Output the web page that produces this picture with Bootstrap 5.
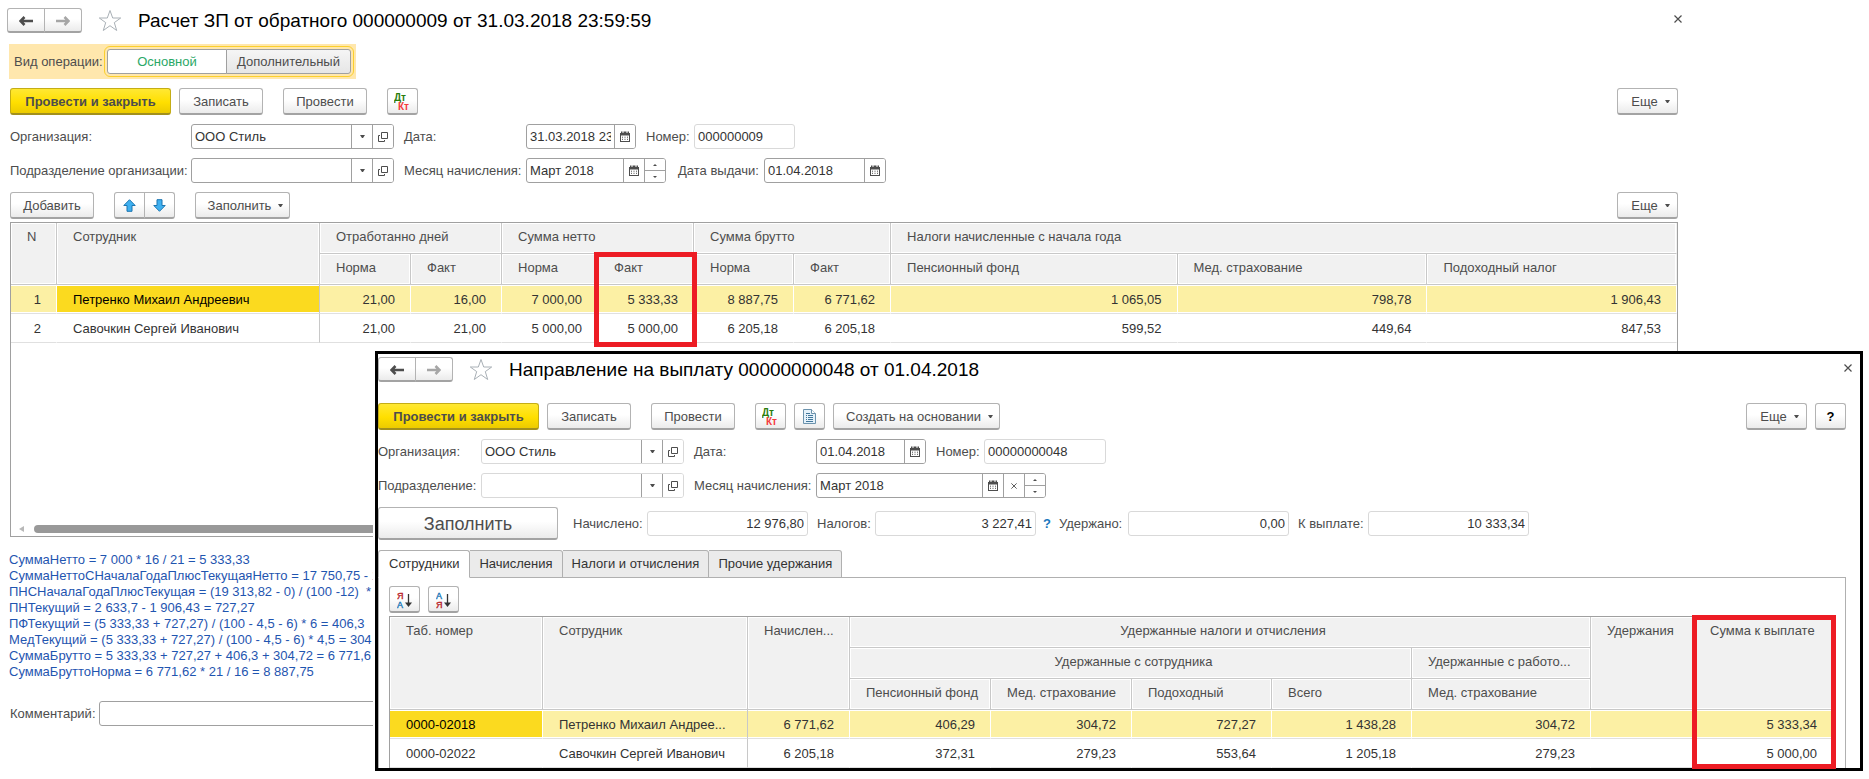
<!DOCTYPE html>
<html lang="ru">
<head>
<meta charset="utf-8">
<meta name="viewport" content="width=device-width, initial-scale=1">
<title>Расчет ЗП от обратного</title>
<link href="https://cdn.jsdelivr.net/npm/bootstrap@5.3.0/dist/css/bootstrap.min.css" rel="stylesheet">
<style>
  body { font: 13px/16px "Liberation Sans", Arial, sans-serif; color: #4d4d4d; background: #fff; overflow: hidden; }
  .doc-main { padding: 8px 191px 0 10px; white-space: nowrap; }
  .gap-row { margin-top: 9px; }
  .head-main { margin-left: -3px; margin-right: -4px; }
  .head-pay { margin-right: -6px; }
  .doc-title { font-size: 19px; line-height: 24px; color: #000; font-weight: 400; margin: 0 0 0 16px; }
  .close-x { border: 0; background: none; padding: 0; line-height: 0; color: #4d4d4d; }
  .bar-pay { margin-top: 21px; }
  .ms-20 { margin-left: 20px; }

  /* push buttons */
  .b1c { --bs-btn-font-size: 13px; --bs-btn-line-height: 16px; --bs-btn-padding-x: 0; --bs-btn-padding-y: 0;
    --bs-btn-border-radius: 3px; --bs-btn-color: #4d4d4d; --bs-btn-border-color: #b3b3b3;
    height: 27px; padding-top: 1px; border-bottom: 2px solid #a3a3a3; background: linear-gradient(#fff 45%, #ebebeb); flex: none;
    display: inline-flex; align-items: center; justify-content: center; }
  .b1c-main { --bs-btn-color: #4d4d4d; font-weight: 700; border-color: #c4ad16; border-bottom-color: #a2901d; background: linear-gradient(#ffe833, #ffdf00 55%, #eccb00); }
  .b1c-big { height: 33px; width: 180px; font-size: 18px; }
  .w-nav { width: 38px; height: 25px; } .w-ico { width: 31px; } .w-more { width: 61px; }
  .w-act { width: 84px; } .w-post { width: 161px; }
  .w-fill { width: 95px; } .w-base { width: 167px; }
  .btn-off { --bs-btn-color: #a6a6a6; }
  .has-tri { padding-left: 6px; gap: 7px; }
  .tri { width: 5px; border: 2px solid transparent; border-top: 3px solid currentColor; border-bottom: 0; display: inline-block; }
  .tri-up { border: 2px solid transparent; border-bottom: 2px solid currentColor; border-top: 0; }
  .tri-dn { border: 2px solid transparent; border-top: 2px solid currentColor; border-bottom: 0; }

  /* operation kind switch */
  .kind { background: #ffe7ad; height: 35px; margin: 11px 0 0 -1px; padding: 2px 2px 2px 5px; width: 347px; }
  .kind-ring { border: 1px solid #fbcf2d; padding: 2px; margin-left: auto; }
  .kind-ring .b1c, .kind-ring .btn-check:checked + .b1c { height: 25px; border-color: #a0a0a0; border-bottom-width: 1px; }
  .kind-ring .b1c { background: linear-gradient(#f5f5f5, #e6e6e6); }
  .kind-ring .btn-check:checked + .b1c { background: #fff; color: #2aa866; }
  .w-k1 { width: 120px; } .w-k2 { width: 125px; }

  /* entry fields */
  .fld { display: flex; height: 25px; border: 1px solid #a0a0a0; border-radius: 3px; background: #fff; flex: none; overflow: hidden; }
  .fld-ro { border-color: #d9d9d9; }
  .fld input { flex: 1 1 0; min-width: 0; width: 0; border: 0; outline: 0; padding: 0 3px; background: none; color: #333; font: inherit; }
  .fld button { flex: none; width: 21px; border: 0; border-left: 1px solid #a0a0a0; background: #fff; padding: 0; color: #4d4d4d;
    display: flex; align-items: center; justify-content: center; }
  .fld .spin { flex: none; width: 21px; display: flex; flex-direction: column; border-left: 1px solid #a0a0a0; }
  .fld .spin button { width: 100%; flex: 1; border-left: 0; }
  .fld .spin button + button { border-top: 1px solid #a0a0a0; }
  .f-org { width: 203px; } .f-date { width: 110px; } .f-sum { width: 161px; }
  .f-num { width: 101px; } .f-numl { width: 122px; } .f-month { width: 140px; } .f-monthl { width: 230px; } .f-issue { width: 122px; }
  .l-a { width: 181px; } .l-b { width: 122px; margin-left: 10px; } .l-c { width: 48px; margin-left: 10px; }
  .l-issue { width: 86px; margin-left: 12px; }
  .l-w { width: 103px; } .l-s { margin-left: 9px; }
  .l-sum1 { width: 74px; margin-left: 15px; } .l-sum2 { width: 58px; } .l-sum3 { width: 69px; } .l-sum4 { width: 70px; }
  .hint { color: #1a77bd; width: 16px; margin-left: 7px; }

  /* data grids */
  .gridbox { border: 1px solid #a0a0a0; background: #fff; margin-top: 3px; }
  .gridbox table { width: 100%; table-layout: fixed; border-collapse: separate; border-spacing: 0; }
  .gridbox th, .gridbox td { padding: 0 15px 0 16px; overflow: hidden; text-overflow: ellipsis; white-space: nowrap; }
  .gridbox th { height: 31px; font-weight: 400; background: #f1f1f1; border: 0 solid #c8c8c8; border-width: 0 1px 1px 0; box-shadow: inset 0 0 0 1px #fff; vertical-align: top; padding: 6px 10px 0 16px; }
  .gridbox th:last-child { border-right-color: #f1f1f1; }
  .gridbox th.th-line { border-right-color: #c8c8c8; }
  .gridbox td { height: 29px; padding-top: 1px; color: #333; text-align: right; border-bottom: 1px solid #e0e0e0; border-right: 1px solid transparent; }
  .gridbox td.tl { text-align: left; }
  .gridbox td.fix { border-right-color: #c8c8c8; }
  .gridbox tr.cur td { background: #fcf0a4; background-clip: padding-box; box-shadow: inset 0 1px #fff, inset 0 -1px #fff; }
  .gridbox tr.cur td.sel { background-color: #fbda1f; color: #000; }
  .gridbox .marked { overflow: visible; position: relative; }
  .marked::after { content: ""; position: absolute; z-index: 2; border: 5px solid #ed1c24; pointer-events: none; top: -2px; left: -4px; right: -4px; height: 95px; }
  .marked-tall::after { height: 154px; left: -2px; }
  .grid-main { min-height: 315px; }
  .scroll-row { padding: 0 24px 3px 8px; gap: 10px; }
  .hbar { height: 8px; border-radius: 4px; background: #999; }
  .formulas { color: #1f55b0; margin: 15px 0 21px -1px; }
  .l-comment { width: 89px; }

  /* second document window */
  .doc-pay { position: absolute; z-index: 5; left: 375px; right: 6px; top: 351px; background: #fff; border: 3px solid #000;
    box-shadow: -2px 0 #fff; padding-top: 3px; white-space: nowrap; }
  .pay-inner { padding-right: 14px; }
  .pay-tabs { border: 0; margin-top: 10px; position: relative; }
  .pay-tabs .nav-link { padding: 0 9px; height: 28px; font-size: 13px; color: #333; background: #ebebeb; border: 1px solid #b0b0b0; border-left-width: 0; border-radius: 0 3px 0 0; margin: 0; }
  .pay-tabs li:first-child .nav-link { padding: 0 10px; border-left-width: 1px; border-radius: 3px 3px 0 0; }
  .pay-tabs .nav-link.active { background: #fff; color: #333; border-color: #b0b0b0 #b0b0b0 #fff; }
  .pay-panel { border: 1px solid #b0b0b0; border-bottom: 0; margin-top: -1px; padding: 8px 11px 0 10px; }
  .pay-panel .gridbox { border-bottom: 0; }
</style>
</head>
<body>
<svg width="0" height="0" class="position-absolute" aria-hidden="true">
  <symbol id="i-back" viewBox="0 0 14 10"><path d="M5.500 1 1.500 5l4 4M2 5H14" fill="none" stroke="currentColor" stroke-width="2.600"/></symbol>
  <symbol id="i-fwd" viewBox="0 0 14 10"><path d="M8.500 1 12.500 5 8.500 9M12 5H0" fill="none" stroke="currentColor" stroke-width="2.600"/></symbol>
  <symbol id="i-star" viewBox="0 0 24 23"><path d="M12 1.500 14.700 9H22.700L16.300 13.600 18.700 21.500 12 16.700 5.300 21.500 7.700 13.600 1.300 9H9.300Z" fill="#fff" stroke="#a9b0b6"/></symbol>
  <symbol id="i-x" viewBox="0 0 8 8"><path d="M.5.5l7 7M7.500.5l-7 7" stroke="currentColor" stroke-width="1.200"/></symbol>
  <symbol id="i-cal" viewBox="0 0 10 11"><path d="M0 2h1V.5h1.500V2h1V.5h3V2h1V.5H9V2h1v9H0ZM1 4.500V10h8V4.500Z" fill="currentColor" fill-rule="evenodd"/><path d="M2 6.200h6M2 8.300h6" stroke="currentColor" stroke-dasharray="1 1.500"/></symbol>
  <symbol id="i-open" viewBox="0 0 10 10"><path d="M3.500.5h6v6h-6ZM2 3.500H.5v6h6V8" fill="none" stroke="currentColor"/></symbol>
  <symbol id="i-up" viewBox="0 0 13 13"><path d="M6.500.7 12.200 6.500H9V12.300H4V6.500H.8Z" fill="#3fb0f0" stroke="#1b75b0"/></symbol>
  <symbol id="i-down" viewBox="0 0 13 13"><path d="M6.500 12.300 12.200 6.500H9V.7H4V6.500H.8Z" fill="#3fb0f0" stroke="#1b75b0"/></symbol>
  <symbol id="i-arr" viewBox="0 0 7 13"><path d="M3.500 0V9" stroke="#333" stroke-width="1.300"/><path d="M0 8.500h7L3.500 13Z" fill="#333"/></symbol>
</svg>

<main class="doc-main">
  <header class="head-main d-flex align-items-center">
    <div class="btn-group flex-shrink-0">
      <button class="btn b1c w-nav" aria-label="Назад"><svg width="14" height="10"><use href="#i-back"/></svg></button>
      <button class="btn b1c btn-off w-nav" aria-label="Вперед"><svg width="14" height="10"><use href="#i-fwd"/></svg></button>
    </div>
    <svg class="ms-3" width="24" height="23"><use href="#i-star"/></svg>
    <h1 class="doc-title">Расчет ЗП от обратного 000000009 от 31.03.2018 23:59:59</h1>
    <button class="close-x ms-auto mb-1" aria-label="Закрыть"><svg width="8" height="8"><use href="#i-x"/></svg></button>
  </header>

  <div class="kind d-flex align-items-center">
    <span id="kindLabel">Вид операции:</span>
    <div class="kind-ring btn-group" role="group" aria-labelledby="kindLabel">
      <input class="btn-check" type="radio" name="kind" id="k1" checked><label class="btn b1c w-k1" for="k1">Основной</label>
      <input class="btn-check" type="radio" name="kind" id="k2"><label class="btn b1c w-k2" for="k2">Дополнительный</label>
    </div>
  </div>

  <div class="d-flex gap-row">
    <button class="btn b1c b1c-main w-post">Провести и закрыть</button>
    <button class="btn b1c w-act ms-2">Записать</button>
    <button class="btn b1c w-act ms-20">Провести</button>
    <button class="btn b1c w-ico ms-20" aria-label="Дт Кт"><svg width="18" height="18" font-family="Liberation Sans" font-weight="700" font-size="10"><text x="0" y="8" fill="#2a7d0b">Дт</text><text x="4" y="17" fill="#f43b3b">Кт</text></svg></button>
    <button class="btn b1c has-tri w-more ms-auto">Еще<i class="tri"></i></button>
  </div>

  <div class="d-flex align-items-center gap-row">
    <label class="l-a" for="org">Организация:</label>
    <div class="fld f-org"><input id="org" value="ООО Стиль"><button aria-label="Список"><i class="tri"></i></button><button aria-label="Открыть"><svg width="10" height="10"><use href="#i-open"/></svg></button></div>
    <label class="l-b" for="date">Дата:</label>
    <div class="fld f-date"><input id="date" value="31.03.2018 23"><button aria-label="Календарь"><svg width="10" height="11"><use href="#i-cal"/></svg></button></div>
    <label class="l-c" for="num">Номер:</label>
    <div class="fld fld-ro f-num"><input id="num" value="000000009" readonly></div>
  </div>
  <div class="d-flex align-items-center gap-row">
    <label class="l-a" for="dep">Подразделение организации:</label>
    <div class="fld f-org"><input id="dep"><button aria-label="Список"><i class="tri"></i></button><button aria-label="Открыть"><svg width="10" height="10"><use href="#i-open"/></svg></button></div>
    <label class="l-b" for="month">Месяц начисления:</label>
    <div class="fld f-month"><input id="month" value="Март 2018"><button aria-label="Календарь"><svg width="10" height="11"><use href="#i-cal"/></svg></button><span class="spin"><button aria-label="Больше"><i class="tri-up"></i></button><button aria-label="Меньше"><i class="tri-dn"></i></button></span></div>
    <label class="l-issue" for="issue">Дата выдачи:</label>
    <div class="fld f-issue"><input id="issue" value="01.04.2018"><button aria-label="Календарь"><svg width="10" height="11"><use href="#i-cal"/></svg></button></div>
  </div>

  <div class="d-flex gap-row">
    <button class="btn b1c w-act">Добавить</button>
    <div class="btn-group ms-20">
      <button class="btn b1c w-ico" aria-label="Вверх"><svg width="13" height="13"><use href="#i-up"/></svg></button>
      <button class="btn b1c w-ico" aria-label="Вниз"><svg width="13" height="13"><use href="#i-down"/></svg></button>
    </div>
    <button class="btn b1c has-tri w-fill ms-20">Заполнить<i class="tri"></i></button>
    <button class="btn b1c has-tri w-more ms-auto">Еще<i class="tri"></i></button>
  </div>

  <div class="gridbox grid-main d-flex flex-column">
    <table>
      <colgroup><col style="width:46px"><col style="width:263px"><col style="width:91px"><col style="width:91px"><col style="width:96px"><col style="width:96px"><col style="width:100px"><col style="width:97px"><col style="width:17.2%"><col style="width:15%"><col></colgroup>
      <thead>
        <tr><th rowspan="2">N</th><th rowspan="2">Сотрудник</th><th colspan="2">Отработанно дней</th><th colspan="2">Сумма нетто</th><th colspan="2">Сумма брутто</th><th colspan="3">Налоги начисленные с начала года</th></tr>
        <tr><th>Норма</th><th>Факт</th><th>Норма</th><th class="marked">Факт</th><th>Норма</th><th>Факт</th><th>Пенсионный фонд</th><th>Мед. страхование</th><th>Подоходный налог</th></tr>
      </thead>
      <tbody>
        <tr class="cur"><td>1</td><td class="tl fix sel">Петренко Михаил Андреевич</td><td>21,00</td><td>16,00</td><td>7 000,00</td><td>5 333,33</td><td>8 887,75</td><td>6 771,62</td><td>1 065,05</td><td>798,78</td><td>1 906,43</td></tr>
        <tr><td>2</td><td class="tl fix">Савочкин Сергей Иванович</td><td>21,00</td><td>21,00</td><td>5 000,00</td><td>5 000,00</td><td>6 205,18</td><td>6 205,18</td><td>599,52</td><td>449,64</td><td>847,53</td></tr>
      </tbody>
    </table>
    <div class="scroll-row mt-auto d-flex align-items-center">
      <svg width="5" height="6"><path d="M5 0v6L0 3z" fill="#b8b8b8"/></svg><div class="hbar flex-fill"></div>
    </div>
  </div>

  <div class="formulas">
    <div>СуммаНетто = 7 000 * 16 / 21 = 5 333,33</div>
    <div>СуммаНеттоСНачалаГодаПлюсТекущаяНетто = 17 750,75 - 1</div>
    <div>ПНСНачалаГодаПлюсТекущая = (19 313,82 - 0) / (100 -12)&nbsp; *</div>
    <div>ПНТекущий = 2 633,7 - 1 906,43 = 727,27</div>
    <div>ПФТекущий = (5 333,33 + 727,27) / (100 - 4,5 - 6) * 6 = 406,3</div>
    <div>МедТекущий = (5 333,33 + 727,27) / (100 - 4,5 - 6) * 4,5 = 304</div>
    <div>СуммаБрутто = 5 333,33 + 727,27 + 406,3 + 304,72 = 6 771,6</div>
    <div>СуммаБруттоНорма = 6 771,62 * 21 / 16 = 8 887,75</div>
  </div>
  <div class="d-flex align-items-center">
    <label class="l-comment" for="comment">Комментарий:</label>
    <div class="fld flex-fill"><input id="comment"></div>
  </div>
</main>

<section class="doc-pay">
  <div class="pay-inner">
    <header class="head-pay d-flex align-items-center">
      <div class="btn-group flex-shrink-0">
        <button class="btn b1c w-nav" aria-label="Назад"><svg width="14" height="10"><use href="#i-back"/></svg></button>
        <button class="btn b1c btn-off w-nav" aria-label="Вперед"><svg width="14" height="10"><use href="#i-fwd"/></svg></button>
      </div>
      <svg class="ms-3" width="24" height="23"><use href="#i-star"/></svg>
      <h2 class="doc-title">Направление на выплату 00000000048 от 01.04.2018</h2>
      <button class="close-x ms-auto mb-1" aria-label="Закрыть"><svg width="8" height="8"><use href="#i-x"/></svg></button>
    </header>

    <div class="bar-pay d-flex">
      <button class="btn b1c b1c-main w-post">Провести и закрыть</button>
      <button class="btn b1c w-act ms-2">Записать</button>
      <button class="btn b1c w-act ms-20">Провести</button>
      <button class="btn b1c w-ico ms-20" aria-label="Дт Кт"><svg width="18" height="18" font-family="Liberation Sans" font-weight="700" font-size="10"><text x="0" y="8" fill="#2a7d0b">Дт</text><text x="4" y="17" fill="#f43b3b">Кт</text></svg></button>
      <button class="btn b1c w-ico ms-2" aria-label="Отчет"><svg width="13" height="15" viewBox="0 0 13 15"><path d="M.5.5h8l4 4v10H.5Z" fill="#e4f1fa" stroke="#6c93ad"/><path d="M8.500.5v4h4" fill="#fff" stroke="#6c93ad"/><path d="M3 4.500h4M3 6.500h1m1 0h5M3 8.500h1m1 0h5M3 10.500h1m1 0h5M3 12.500h7" stroke="#41779c"/></svg></button>
      <button class="btn b1c has-tri w-base ms-2">Создать на основании<i class="tri"></i></button>
      <button class="btn b1c has-tri w-more ms-auto">Еще<i class="tri"></i></button>
      <button class="btn b1c w-ico fw-bold text-black ms-2">?</button>
    </div>

    <div class="d-flex align-items-center gap-row">
      <label class="l-w" for="org2">Организация:</label>
      <div class="fld fld-ro f-org"><input id="org2" value="ООО Стиль"><button aria-label="Список"><i class="tri"></i></button><button aria-label="Открыть"><svg width="10" height="10"><use href="#i-open"/></svg></button></div>
      <label class="l-b" for="date2">Дата:</label>
      <div class="fld f-date"><input id="date2" value="01.04.2018"><button aria-label="Календарь"><svg width="10" height="11"><use href="#i-cal"/></svg></button></div>
      <label class="l-c" for="num2">Номер:</label>
      <div class="fld fld-ro f-numl"><input id="num2" value="00000000048" readonly></div>
    </div>
    <div class="d-flex align-items-center gap-row">
      <label class="l-w" for="dep2">Подразделение:</label>
      <div class="fld fld-ro f-org"><input id="dep2"><button aria-label="Список"><i class="tri"></i></button><button aria-label="Открыть"><svg width="10" height="10"><use href="#i-open"/></svg></button></div>
      <label class="l-b" for="month2">Месяц начисления:</label>
      <div class="fld f-monthl"><input id="month2" value="Март 2018"><button aria-label="Календарь"><svg width="10" height="11"><use href="#i-cal"/></svg></button><button aria-label="Очистить"><svg width="6" height="6"><use href="#i-x"/></svg></button><span class="spin"><button aria-label="Больше"><i class="tri-up"></i></button><button aria-label="Меньше"><i class="tri-dn"></i></button></span></div>
    </div>

    <div class="d-flex align-items-center gap-row">
      <button class="btn b1c b1c-big">Заполнить</button>
      <label class="l-sum1" for="s1">Начислено:</label>
      <div class="fld fld-ro f-sum"><input class="text-end" id="s1" value="12 976,80" readonly></div>
      <label class="l-s l-sum2" for="s2">Налогов:</label>
      <div class="fld fld-ro f-sum"><input class="text-end" id="s2" value="3 227,41" readonly></div>
      <a class="hint text-decoration-none fw-bold" href="#">?</a>
      <label class="l-sum3" for="s3">Удержано:</label>
      <div class="fld fld-ro f-sum"><input class="text-end" id="s3" value="0,00" readonly></div>
      <label class="l-s l-sum4" for="s4">К выплате:</label>
      <div class="fld fld-ro f-sum"><input class="text-end" id="s4" value="10 333,34" readonly></div>
    </div>

    <ul class="nav nav-tabs pay-tabs">
      <li class="nav-item"><button class="nav-link active">Сотрудники</button></li>
      <li class="nav-item"><button class="nav-link">Начисления</button></li>
      <li class="nav-item"><button class="nav-link">Налоги и отчисления</button></li>
      <li class="nav-item"><button class="nav-link">Прочие удержания</button></li>
    </ul>
    <div class="pay-panel">
      <div class="d-flex gap-2">
        <button class="btn b1c w-ico" aria-label="По убыванию"><svg width="16" height="19" font-family="Liberation Sans" font-size="9"><text x="0" y="9" fill="#b8242a" stroke="#b8242a" stroke-width=".4">Я</text><text x="0" y="18" fill="#2279b8" stroke="#2279b8" stroke-width=".4">А</text><use href="#i-arr" x="8" y="4" width="7" height="13"/></svg></button>
        <button class="btn b1c w-ico" aria-label="По возрастанию"><svg width="16" height="19" font-family="Liberation Sans" font-size="9"><text x="0" y="9" fill="#2279b8" stroke="#2279b8" stroke-width=".4">А</text><text x="0" y="18" fill="#b8242a" stroke="#b8242a" stroke-width=".4">Я</text><use href="#i-arr" x="8" y="4" width="7" height="13"/></svg></button>
      </div>
      <div class="gridbox">
        <table>
          <colgroup><col style="width:153px"><col style="width:205px"><col style="width:102px"><col style="width:141px"><col style="width:141px"><col style="width:140px"><col style="width:140px"><col style="width:179px"><col style="width:103px"><col></colgroup>
          <thead>
            <tr><th rowspan="3">Таб. номер</th><th rowspan="3">Сотрудник</th><th rowspan="3">Начислен...</th><th colspan="5" class="text-center">Удержанные налоги и отчисления</th><th rowspan="3">Удержания</th><th rowspan="3" class="marked marked-tall">Сумма к выплате</th></tr>
            <tr><th colspan="4" class="text-center">Удержанные с сотрудника</th><th class="th-line">Удержанные с работо...</th></tr>
            <tr><th>Пенсионный фонд</th><th>Мед. страхование</th><th>Подоходный</th><th>Всего</th><th class="th-line">Мед. страхование</th></tr>
          </thead>
          <tbody>
            <tr class="cur"><td class="tl sel">0000-02018</td><td class="tl fix">Петренко Михаил Андрее...</td><td>6 771,62</td><td>406,29</td><td>304,72</td><td>727,27</td><td>1 438,28</td><td>304,72</td><td></td><td>5 333,34</td></tr>
            <tr><td class="tl">0000-02022</td><td class="tl fix">Савочкин Сергей Иванович</td><td>6 205,18</td><td>372,31</td><td>279,23</td><td>553,64</td><td>1 205,18</td><td>279,23</td><td></td><td>5 000,00</td></tr>
          </tbody>
        </table>
      </div>
    </div>
  </div>
</section>
<script src="https://cdn.jsdelivr.net/npm/bootstrap@5.3.0/dist/js/bootstrap.bundle.min.js"></script>
</body>
</html>
